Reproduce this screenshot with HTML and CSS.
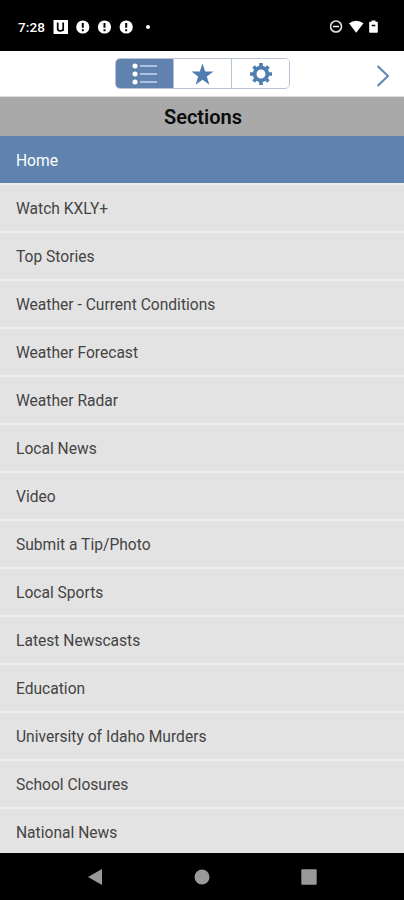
FILE: index.html
```html
<!DOCTYPE html>
<html lang="en">
<head>
    <meta charset="UTF-8">
    <meta name="viewport" content="width=device-width, initial-scale=1.0">
    <title>Sections</title>
    <link rel="stylesheet" href="styles.css">
</head>
<body>
    <div class="status-bar">
        <span class="clock">7:28</span>
        <svg class="status-left" width="100" height="16" viewBox="0 0 100 16">
            <rect x="0.5" y="1" width="14.5" height="14" rx="0.5" fill="#fff"/>
            <path d="M4.7 3.5v6.2q0 2.2 2.6 2.2t2.9-2V3.5M10.2 3.5v8.3" fill="none" stroke="#000" stroke-width="1.7"/>
            <g fill="#fff">
                <circle cx="29.8" cy="8" r="6.6"/>
                <circle cx="51.5" cy="8" r="6.6"/>
                <circle cx="73.2" cy="8" r="6.6"/>
                <circle cx="95" cy="8" r="2"/>
            </g>
            <path d="M29.8 4v4.800M29.800 10.200v2M51.500 4v4.800M51.500 10.200v2M73.200 4v4.800M73.200 10.200v2" stroke="#000" stroke-width="2"/>
        </svg>
        <svg class="status-right" width="50" height="16" viewBox="0 0 50 16">
            <circle cx="6" cy="7.500" r="5.500" fill="none" stroke="#e8e8e8" stroke-width="1.600"/>
            <path d="M3 7.500h6" stroke="#e8e8e8" stroke-width="1.600"/>
            <path d="M19 4.300Q26.200 -1 33.500 4.300L26.200 13.800z" fill="#fff"/>
            <path d="M41.500 1.500h4v1.300h1.500q.8 0 .8.800v9.400q0 .8-.8.800h-7q-.8 0-.8-.8V3.600q0-.8.800-.8h1.500z" fill="#fff"/>
            <path d="M41.700 6.500h3.600" stroke="#000" stroke-width="1.500"/>
        </svg>
    </div>

    <div class="toolbar">
        <div class="tabs">
            <button class="tab active" aria-label="Sections">
                <svg width="28" height="24" viewBox="0 0 28 24">
                    <g fill="#fff">
                        <circle cx="4" cy="4" r="2.500"/>
                        <circle cx="4" cy="12" r="2.500"/>
                        <circle cx="4" cy="20" r="2.500"/>
                    </g>
                    <path d="M9 4h17M9 12h17M9 20h17" stroke="#c9d8ea" stroke-width="1.600"/>
                </svg>
            </button>
            <button class="tab" aria-label="Favorites">
                <svg width="24" height="24" viewBox="0 0 24 24">
                    <path d="M11.500 1.500l2.700 8.100h8.300l-6.700 4.900 2.600 8.200-6.900-4.900-6.900 4.900 2.600-8.200L.5 9.600h8.300z" fill="#4f7db0"/>
                </svg>
            </button>
            <button class="tab" aria-label="Settings">
                <svg width="24" height="24" viewBox="0 0 24 24">
                    <circle cx="12" cy="12" r="6.400" fill="none" stroke="#4f7db0" stroke-width="3.800"/>
                    <path d="M12 1v4M12 19v4M1 12h4M19 12h4M4.500 4.500l2.500 2.500M17 17l2.500 2.500M4.500 19.500L7 17M17 7l2.500-2.500" stroke="#4f7db0" stroke-width="3.600"/>
                </svg>
            </button>
        </div>
        <svg class="next" width="14" height="24" viewBox="0 0 14 24">
            <path d="M1.500 2L12 12 1.500 22" fill="none" stroke="#5f86b6" stroke-width="2"/>
        </svg>
    </div>

    <h1 class="title">Sections</h1>

    <ul class="sections">
        <li class="selected">Home</li>
        <li>Watch KXLY+</li>
        <li>Top Stories</li>
        <li>Weather - Current Conditions</li>
        <li>Weather Forecast</li>
        <li>Weather Radar</li>
        <li>Local News</li>
        <li>Video</li>
        <li>Submit a Tip/Photo</li>
        <li>Local Sports</li>
        <li>Latest Newscasts</li>
        <li>Education</li>
        <li>University of Idaho Murders</li>
        <li>School Closures</li>
        <li>National News</li>
    </ul>

    <div class="nav-bar">
        <svg width="16" height="18" viewBox="0 0 16 18">
            <path d="M15 1v16L1 9z" fill="#999"/>
        </svg>
        <svg width="16" height="18" viewBox="0 0 16 18">
            <circle cx="8" cy="9" r="7.500" fill="#999"/>
        </svg>
        <svg width="16" height="18" viewBox="0 0 16 18">
            <rect x="0.300" y="1.200" width="15.400" height="15.600" rx="1" fill="#999"/>
        </svg>
    </div>
</body>
</html>
```

FILE: styles.css
```css
* {
    margin: 0;
    padding: 0;
    box-sizing: border-box;
}

body {
    height: 900px;
    display: flex;
    flex-direction: column;
    background: #000;
    font-family: Roboto, 'Liberation Sans', sans-serif;
    overflow: hidden;
}

.status-bar {
    flex: none;
    height: 51px;
    padding: 2px 24px 0 18px;
    display: flex;
    align-items: center;
    color: #fff;
}

.clock {
    width: 35px;
    font-size: 13.5px;
    font-weight: 500;
    letter-spacing: 0.1px;
}

.status-right {
    margin-left: auto;
}

.toolbar {
    flex: none;
    height: 46px;
    padding-right: 14px;
    display: grid;
    grid-template-columns: 115px 175px 1fr;
    align-items: center;
    background: #fff;
    border-bottom: 1px solid #dcdcdc;
}

.tabs {
    grid-column: 2;
    height: 31px;
    display: flex;
    border: 1px solid #b9c3d8;
    border-radius: 5px;
    overflow: hidden;
}

.tab {
    flex: 1;
    display: flex;
    align-items: center;
    justify-content: center;
    background: #fff;
    border: none;
}

.tab + .tab {
    border-left: 1px solid #b9c3d8;
}

.tab.active {
    background: #5f82af;
}

.next {
    justify-self: end;
    margin-top: 4px;
}

.title {
    flex: none;
    height: 39px;
    padding-top: 1px;
    background: #a9a9a9;
    color: #0c0c0c;
    font-size: 20px;
    font-weight: 600;
    line-height: 39px;
    text-align: center;
    text-indent: 2px;
}

.sections {
    flex: none;
    height: 717px;
    padding-top: 1px;
    list-style: none;
    background: linear-gradient(#5f82af 1px, #e3e3e3 1px);
    overflow: hidden;
}

.sections li {
    height: 48px;
    padding-left: 16px;
    border-bottom: 2px solid #eee;
    color: #444;
    font-size: 15.6px;
    line-height: 48px;
}

.sections .selected {
    background: #5f82af;
    color: #fff;
}

.nav-bar {
    flex: 1;
    padding: 0 87px;
    display: flex;
    align-items: center;
    justify-content: space-between;
}
```
